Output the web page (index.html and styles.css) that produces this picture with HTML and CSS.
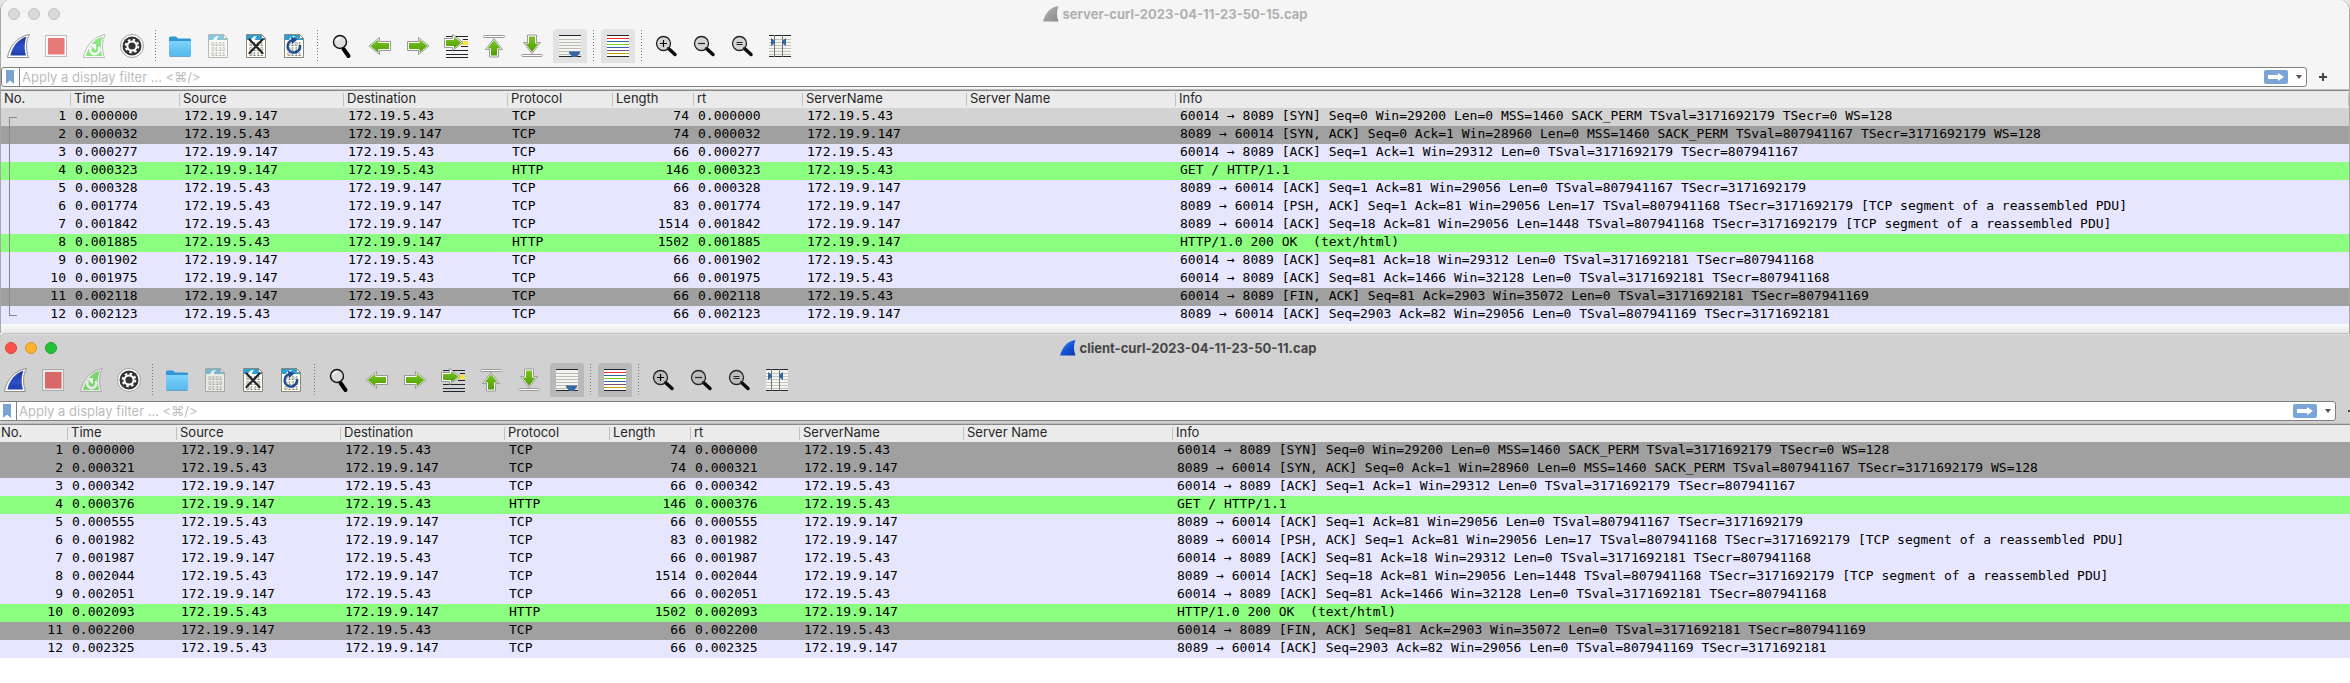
FILE: index.html
```html
<!DOCTYPE html>
<html lang="en">
<head>
<meta charset="utf-8">
<title>Packet captures</title>
<link rel="stylesheet" href="styles.css">
</head>
<body>
<svg class="sprite" aria-hidden="true">
  <defs>
    <linearGradient id="g-blue" x1="0" y1="0" x2="0" y2="1"><stop offset="0" stop-color="#1f3796"/><stop offset=".6" stop-color="#2d4fc8"/><stop offset="1" stop-color="#2340a8"/></linearGradient>
    <linearGradient id="g-app" x1="0" y1="0" x2="1" y2="1"><stop offset="0" stop-color="#3fa0f5"/><stop offset=".5" stop-color="#1658d8"/><stop offset="1" stop-color="#0c36a8"/></linearGradient>
    <linearGradient id="g-gray" x1="0" y1="0" x2="1" y2="1"><stop offset="0" stop-color="#b4b4b4"/><stop offset="1" stop-color="#8a8a8a"/></linearGradient>
    <linearGradient id="g-green" x1="0" y1="0" x2="0" y2="1"><stop offset="0" stop-color="#7ac520"/><stop offset="1" stop-color="#4f9d08"/></linearGradient>
    <linearGradient id="g-folder" x1="0" y1="0" x2="0" y2="1"><stop offset="0" stop-color="#7fd3fb"/><stop offset="1" stop-color="#55b9ef"/></linearGradient>
  </defs>
  <symbol id="i-fin" viewBox="0 0 34 34">
    <path d="M6.500 28.500C8 18 16 7.500 28.500 5.500C25 11 24.500 21 27.500 28.500Z" fill="#fff" stroke="#8e8e8e"/>
    <path d="M9.500 26.500C11 18 17 10 25.500 7.800C23.500 13 23 20 25 26.500Z" fill="url(#g-blue)"/>
  </symbol>
  <symbol id="i-stop" viewBox="0 0 34 34">
    <rect x="6.500" y="6.500" width="21" height="21" fill="#fff" stroke="#8e8e8e"/>
    <rect x="9" y="9" width="16.500" height="16.500" fill="#dd1515"/>
  </symbol>
  <symbol id="i-restart" viewBox="0 0 34 34">
    <path d="M6.500 28.500C8 18 16 7.500 28.500 5.500C25 11 24.500 21 27.500 28.500Z" fill="#fff" stroke="#8e8e8e"/>
    <path d="M9 27C11 18 17 10 26 7.500C23.500 13 23 20 25.300 27Z" fill="#34da1e"/>
    <path d="M14 18A4.500 4.500 0 1 0 21.500 18" fill="none" stroke="#fff" stroke-width="2.500"/>
    <path d="M12 15H19V21.500Z" fill="#fff"/>
  </symbol>
  <symbol id="i-gear" viewBox="0 0 34 34">
    <circle cx="17" cy="17" r="11.500" fill="#fff" stroke="#a0a0a0"/>
    <circle cx="17" cy="17" r="9.500" fill="#333"/>
    <circle cx="17" cy="17" r="4.600" fill="none" stroke="#fff" stroke-width="2"/>
    <circle cx="17" cy="17" r="6.300" fill="none" stroke="#fff" stroke-width="2" stroke-dasharray="2.470 2.470"/>
  </symbol>
  <symbol id="i-folder" viewBox="0 0 34 34">
    <path d="M6 9Q6 7.500 7.500 7.500H13L15 9.500H27Q28 9.500 28 11V14H6Z" fill="#2f97d8"/>
    <path d="M6 12H28V25.500Q28 27 26.500 27H7.500Q6 27 6 25.500Z" fill="url(#g-folder)"/>
    <path d="M6.500 27.500H27.500" stroke="#3a87b8" stroke-opacity=".7"/>
  </symbol>
  <symbol id="i-doc" viewBox="0 0 34 34">
    <path d="M7.500 5.500H22.500L26.500 9.500V28.500H7.500Z" fill="#fffff4" stroke="#85877c"/>
    <path d="M8 6H22V10H26V11H16C16 9 17 8 18 7C14 7 13 9 12 11H8Z" fill="#2a9fd8"/>
    <path d="M22.500 5.500V9.500H26.500Z" fill="#fff" stroke="#85877c"/>
    <text x="10" y="17" class="bits">0101</text><text x="10" y="22" class="bits">0110</text><text x="10" y="27" class="bits">0111</text>
  </symbol>
  <symbol id="i-cross" viewBox="0 0 34 34">
    <path d="M10.500 10.500L23.500 24M23.500 10.500L10.500 24" fill="none" stroke="#23272b" stroke-width="2.200" stroke-linecap="round"/>
  </symbol>
  <symbol id="i-reload" viewBox="0 0 34 34">
    <path d="M16 11A6.300 6.300 0 1 0 23 16" fill="none" stroke="#1f4a94" stroke-width="2.400"/>
    <path d="M14 7.500L20.500 10.500L15 15Z" fill="#1f4a94"/>
  </symbol>
  <symbol id="i-find" viewBox="0 0 34 34">
    <path d="M18.500 20L23.500 27" stroke="#000" stroke-width="4" stroke-linecap="round"/>
    <circle cx="15" cy="13" r="6.500" fill="#dcdcdc" fill-opacity=".85" stroke="#111" stroke-width="1.400"/>
    <path d="M11 12Q12 9 15 9" fill="none" stroke="#fff" stroke-width="1.500"/>
  </symbol>
  <symbol id="i-right" viewBox="0 0 34 34">
    <path d="M6.500 12.500H17.500V8.500L28 17L17.500 25.500V21.500H6.500Z" fill="#fff" stroke="#999" stroke-linejoin="round"/>
    <path d="M8 14H18.500V10.500L26.500 17L18.500 23.500V20H8Z" fill="url(#g-green)"/>
  </symbol>
  <symbol id="i-left" viewBox="0 0 34 34">
    <path d="M27.500 12.500H16.500V8.500L6 17L16.500 25.500V21.500H27.500Z" fill="#fff" stroke="#999" stroke-linejoin="round"/>
    <path d="M26 14H15.500V10.500L7.500 17L15.500 23.500V20H26Z" fill="url(#g-green)"/>
  </symbol>
  <symbol id="i-goto" viewBox="0 0 34 34">
    <path d="M7 7.500H29M7 21.500H29M7 25.500H29M7 28.500H29M24 10.500H29M22 17.500H29" stroke="#20252b"/>
    <path d="M21 12H29V16H21Z" fill="#fbe33c"/>
    <path d="M5.500 9.500H13.500V5.500L24 13.500L13.500 21.500V18.500H5.500Z" fill="#fff" stroke="#999" stroke-linejoin="round"/>
    <path d="M7 11H15V8L22.500 13.500L15 19.500V17H7Z" fill="url(#g-green)"/>
  </symbol>
  <symbol id="i-top" viewBox="0 0 34 34">
    <rect x="6.500" y="6.500" width="21" height="2" rx="1" fill="#fff" stroke="#999"/>
    <path d="M12.500 28V20.500H8.500L17 9.500L25.500 20.500H21.500V28Z" fill="#fff" stroke="#999" stroke-linejoin="round"/>
    <path d="M14 26.500V19.500H10.500L17 11L23.500 19.500H20V26.500Z" fill="url(#g-green)"/>
  </symbol>
  <symbol id="i-bottom" viewBox="0 0 34 34">
    <rect x="6.500" y="25.500" width="21" height="2" rx="1" fill="#fff" stroke="#999"/>
    <path d="M12.500 6V13.500H8.500L17 24.500L25.500 13.500H21.500V6Z" fill="#fff" stroke="#999" stroke-linejoin="round"/>
    <path d="M14 7.500V14.500H10.500L17 23L23.500 14.500H20V7.500Z" fill="url(#g-green)"/>
  </symbol>
  <symbol id="i-autoscroll" viewBox="0 0 34 34">
    <rect x="6" y="6" width="22" height="22" fill="#f4f4f0"/>
    <path d="M6 10.500H28M6 13.500H28M6 16.500H28M6 19.500H28M6 22.500H28M6 25.500H28" stroke="#b9bbb3"/>
    <path d="M6 6.500H28M6 27.500H28" stroke="#20252b"/>
    <path d="M16 22.500H27V24L23.500 28H19.500L16 24Z" fill="#3465a4"/>
  </symbol>
  <symbol id="i-colorize" viewBox="0 0 34 34">
    <rect x="6" y="6" width="22" height="22" fill="#fff"/>
    <path d="M6 6.500H28M6 27.500H28" stroke="#20252b"/>
    <path d="M6 9.500H28" stroke="#ef2929"/><path d="M6 12.500H28" stroke="#3465a4"/><path d="M6 15.500H28" stroke="#73d216"/>
    <path d="M6 18.500H28" stroke="#3465a4"/><path d="M6 21.500H28" stroke="#75507b"/><path d="M6 24.500H28" stroke="#c4a000"/>
  </symbol>
  <symbol id="i-lens" viewBox="0 0 34 34">
    <path d="M19.500 19.500L26 25.500" stroke="#0c0c0c" stroke-width="3.500" stroke-linecap="round"/>
    <circle cx="14.500" cy="14.500" r="7" fill="#999" fill-opacity=".35" stroke="#222" stroke-width="1.300"/>
  </symbol>
  <symbol id="i-plus" viewBox="0 0 34 34"><path d="M11 14.500H18M14.500 11V18" stroke="#000" stroke-width="1.200"/></symbol>
  <symbol id="i-minus" viewBox="0 0 34 34"><path d="M11 14.500H18" stroke="#222" stroke-width="1.200"/></symbol>
  <symbol id="i-equal" viewBox="0 0 34 34"><path d="M11.500 13.500H17.500M11.500 15.500H17.500" stroke="#222"/></symbol>
  <symbol id="i-columns" viewBox="0 0 34 34">
    <rect x="6" y="6" width="22" height="22" fill="#f4f4f0"/>
    <path d="M6 10.500H28M6 13.500H28M6 16.500H28M6 19.500H28M6 22.500H28M6 25.500H28" stroke="#c2c4bc"/>
    <path d="M6 6.500H28M6 27.500H28" stroke="#20252b"/>
    <path d="M11.500 6V28M19.500 6V28" stroke="#777"/>
    <path d="M8 9L12 12V14L8 17ZM23 9L19 12V14L23 17Z" fill="#3465a4"/>
  </symbol>
  <symbol id="i-bookmark" viewBox="0 0 16 18"><path d="M4 2H12V16L8 12.500L4 16Z" fill="#7aa3d4"/></symbol>
  <symbol id="i-apply" viewBox="0 0 24 14"><path d="M4 5H14V3L20 7L14 11V9H4Z" fill="#fff"/></symbol>
  <symbol id="i-caret" viewBox="0 0 14 14"><path d="M4 5H10L7 9Z" fill="#555"/></symbol>
  <symbol id="i-add" viewBox="0 0 10 10"><path d="M1 5H9M5 1V9" stroke="#444" stroke-width="2"/></symbol>
  <symbol id="i-app" viewBox="0 0 16 16"><path d="M0 15.500C2 8 7 1 15.500 0C13.500 5 13.500 10 15.500 15.500Z"/></symbol>
</svg>

<main class="desktop">
<section class="window window--back" aria-label="Server capture">
  <header class="titlebar">
    <div class="lights"><button class="light" aria-label="Close"></button><button class="light" aria-label="Minimize"></button><button class="light" aria-label="Zoom"></button></div>
    <h1 class="title"><svg class="app-icon"><use href="#i-app"/></svg>server-curl-2023-04-11-23-50-15.cap</h1>
  </header>
  <nav class="toolbar" aria-label="Main toolbar">
    <button class="tool" aria-label="Start capture"><svg><use href="#i-fin"/></svg></button>
    <button class="tool tool--dim" aria-label="Stop capture"><svg><use href="#i-stop"/></svg></button>
    <button class="tool tool--dim" aria-label="Restart capture"><svg><use href="#i-restart"/></svg></button>
    <button class="tool" aria-label="Capture options"><svg><use href="#i-gear"/></svg></button>
    <span class="sep"></span>
    <button class="tool" aria-label="Open file"><svg><use href="#i-folder"/></svg></button>
    <button class="tool tool--dim" aria-label="Save file"><svg><use href="#i-doc"/></svg></button>
    <button class="tool" aria-label="Close file"><svg><use href="#i-doc"/><use href="#i-cross"/></svg></button>
    <button class="tool" aria-label="Reload file"><svg><use href="#i-doc"/><use href="#i-reload"/></svg></button>
    <span class="sep"></span>
    <button class="tool" aria-label="Find packet"><svg><use href="#i-find"/></svg></button>
    <button class="tool" aria-label="Previous packet"><svg><use href="#i-left"/></svg></button>
    <button class="tool" aria-label="Next packet"><svg><use href="#i-right"/></svg></button>
    <button class="tool" aria-label="Go to packet"><svg><use href="#i-goto"/></svg></button>
    <button class="tool" aria-label="First packet"><svg><use href="#i-top"/></svg></button>
    <button class="tool" aria-label="Last packet"><svg><use href="#i-bottom"/></svg></button>
    <button class="tool" aria-label="Auto scroll" aria-pressed="true"><svg><use href="#i-autoscroll"/></svg></button>
    <span class="sep"></span>
    <button class="tool" aria-label="Colorize packets" aria-pressed="true"><svg><use href="#i-colorize"/></svg></button>
    <span class="sep"></span>
    <button class="tool" aria-label="Zoom in"><svg><use href="#i-lens"/><use href="#i-plus"/></svg></button>
    <button class="tool" aria-label="Zoom out"><svg><use href="#i-lens"/><use href="#i-minus"/></svg></button>
    <button class="tool" aria-label="Normal size"><svg><use href="#i-lens"/><use href="#i-equal"/></svg></button>
    <button class="tool" aria-label="Resize columns"><svg><use href="#i-columns"/></svg></button>
  </nav>
  <form class="filter">
    <div class="filter-box">
      <button type="button" class="bookmark" aria-label="Bookmarks"><svg><use href="#i-bookmark"/></svg></button>
      <input class="filter-input" type="text" aria-label="Display filter" placeholder="Apply a display filter ... &lt;⌘/&gt;">
      <button type="button" class="apply" aria-label="Apply"><svg><use href="#i-apply"/></svg></button>
      <button type="button" class="caret" aria-label="Recent filters"><svg><use href="#i-caret"/></svg></button>
    </div>
    <button type="button" class="add" aria-label="Add filter button"><svg><use href="#i-add"/></svg></button>
  </form>
  <table class="packets">
    <colgroup><col class="c-no"><col class="c-time"><col class="c-addr"><col class="c-addr"><col class="c-proto"><col class="c-len"><col class="c-time"><col class="c-addr"><col class="c-name"><col></colgroup>
    <thead><tr><th>No.</th><th>Time</th><th>Source</th><th>Destination</th><th>Protocol</th><th>Length</th><th>rt</th><th>ServerName</th><th>Server Name</th><th>Info</th></tr></thead>
    <tbody class="related">
      <tr class="selected"><td>1</td><td>0.000000</td><td>172.19.9.147</td><td>172.19.5.43</td><td>TCP</td><td>74</td><td>0.000000</td><td>172.19.5.43</td><td></td><td>60014 → 8089 [SYN] Seq=0 Win=29200 Len=0 MSS=1460 SACK_PERM TSval=3171692179 TSecr=0 WS=128</td></tr>
      <tr class="syn"><td>2</td><td>0.000032</td><td>172.19.5.43</td><td>172.19.9.147</td><td>TCP</td><td>74</td><td>0.000032</td><td>172.19.9.147</td><td></td><td>8089 → 60014 [SYN, ACK] Seq=0 Ack=1 Win=28960 Len=0 MSS=1460 SACK_PERM TSval=807941167 TSecr=3171692179 WS=128</td></tr>
      <tr><td>3</td><td>0.000277</td><td>172.19.9.147</td><td>172.19.5.43</td><td>TCP</td><td>66</td><td>0.000277</td><td>172.19.5.43</td><td></td><td>60014 → 8089 [ACK] Seq=1 Ack=1 Win=29312 Len=0 TSval=3171692179 TSecr=807941167</td></tr>
      <tr class="http"><td>4</td><td>0.000323</td><td>172.19.9.147</td><td>172.19.5.43</td><td>HTTP</td><td>146</td><td>0.000323</td><td>172.19.5.43</td><td></td><td>GET / HTTP/1.1</td></tr>
      <tr><td>5</td><td>0.000328</td><td>172.19.5.43</td><td>172.19.9.147</td><td>TCP</td><td>66</td><td>0.000328</td><td>172.19.9.147</td><td></td><td>8089 → 60014 [ACK] Seq=1 Ack=81 Win=29056 Len=0 TSval=807941167 TSecr=3171692179</td></tr>
      <tr><td>6</td><td>0.001774</td><td>172.19.5.43</td><td>172.19.9.147</td><td>TCP</td><td>83</td><td>0.001774</td><td>172.19.9.147</td><td></td><td>8089 → 60014 [PSH, ACK] Seq=1 Ack=81 Win=29056 Len=17 TSval=807941168 TSecr=3171692179 [TCP segment of a reassembled PDU]</td></tr>
      <tr><td>7</td><td>0.001842</td><td>172.19.5.43</td><td>172.19.9.147</td><td>TCP</td><td>1514</td><td>0.001842</td><td>172.19.9.147</td><td></td><td>8089 → 60014 [ACK] Seq=18 Ack=81 Win=29056 Len=1448 TSval=807941168 TSecr=3171692179 [TCP segment of a reassembled PDU]</td></tr>
      <tr class="http"><td>8</td><td>0.001885</td><td>172.19.5.43</td><td>172.19.9.147</td><td>HTTP</td><td>1502</td><td>0.001885</td><td>172.19.9.147</td><td></td><td>HTTP/1.0 200 OK&nbsp; (text/html)</td></tr>
      <tr><td>9</td><td>0.001902</td><td>172.19.9.147</td><td>172.19.5.43</td><td>TCP</td><td>66</td><td>0.001902</td><td>172.19.5.43</td><td></td><td>60014 → 8089 [ACK] Seq=81 Ack=18 Win=29312 Len=0 TSval=3171692181 TSecr=807941168</td></tr>
      <tr><td>10</td><td>0.001975</td><td>172.19.9.147</td><td>172.19.5.43</td><td>TCP</td><td>66</td><td>0.001975</td><td>172.19.5.43</td><td></td><td>60014 → 8089 [ACK] Seq=81 Ack=1466 Win=32128 Len=0 TSval=3171692181 TSecr=807941168</td></tr>
      <tr class="syn"><td>11</td><td>0.002118</td><td>172.19.9.147</td><td>172.19.5.43</td><td>TCP</td><td>66</td><td>0.002118</td><td>172.19.5.43</td><td></td><td>60014 → 8089 [FIN, ACK] Seq=81 Ack=2903 Win=35072 Len=0 TSval=3171692181 TSecr=807941169</td></tr>
      <tr><td>12</td><td>0.002123</td><td>172.19.5.43</td><td>172.19.9.147</td><td>TCP</td><td>66</td><td>0.002123</td><td>172.19.9.147</td><td></td><td>8089 → 60014 [ACK] Seq=2903 Ack=82 Win=29056 Len=0 TSval=807941169 TSecr=3171692181</td></tr>
    </tbody>
  </table>
</section>

<section class="window window--front" aria-label="Client capture">
  <header class="titlebar">
    <div class="lights"><button class="light light--close" aria-label="Close"></button><button class="light light--min" aria-label="Minimize"></button><button class="light light--zoom" aria-label="Zoom"></button></div>
    <h1 class="title"><svg class="app-icon"><use href="#i-app"/></svg>client-curl-2023-04-11-23-50-11.cap</h1>
  </header>
  <nav class="toolbar" aria-label="Main toolbar">
    <button class="tool" aria-label="Start capture"><svg><use href="#i-fin"/></svg></button>
    <button class="tool tool--dim" aria-label="Stop capture"><svg><use href="#i-stop"/></svg></button>
    <button class="tool tool--dim" aria-label="Restart capture"><svg><use href="#i-restart"/></svg></button>
    <button class="tool" aria-label="Capture options"><svg><use href="#i-gear"/></svg></button>
    <span class="sep"></span>
    <button class="tool" aria-label="Open file"><svg><use href="#i-folder"/></svg></button>
    <button class="tool tool--dim" aria-label="Save file"><svg><use href="#i-doc"/></svg></button>
    <button class="tool" aria-label="Close file"><svg><use href="#i-doc"/><use href="#i-cross"/></svg></button>
    <button class="tool" aria-label="Reload file"><svg><use href="#i-doc"/><use href="#i-reload"/></svg></button>
    <span class="sep"></span>
    <button class="tool" aria-label="Find packet"><svg><use href="#i-find"/></svg></button>
    <button class="tool" aria-label="Previous packet"><svg><use href="#i-left"/></svg></button>
    <button class="tool" aria-label="Next packet"><svg><use href="#i-right"/></svg></button>
    <button class="tool" aria-label="Go to packet"><svg><use href="#i-goto"/></svg></button>
    <button class="tool" aria-label="First packet"><svg><use href="#i-top"/></svg></button>
    <button class="tool" aria-label="Last packet"><svg><use href="#i-bottom"/></svg></button>
    <button class="tool" aria-label="Auto scroll" aria-pressed="true"><svg><use href="#i-autoscroll"/></svg></button>
    <span class="sep"></span>
    <button class="tool" aria-label="Colorize packets" aria-pressed="true"><svg><use href="#i-colorize"/></svg></button>
    <span class="sep"></span>
    <button class="tool" aria-label="Zoom in"><svg><use href="#i-lens"/><use href="#i-plus"/></svg></button>
    <button class="tool" aria-label="Zoom out"><svg><use href="#i-lens"/><use href="#i-minus"/></svg></button>
    <button class="tool" aria-label="Normal size"><svg><use href="#i-lens"/><use href="#i-equal"/></svg></button>
    <button class="tool" aria-label="Resize columns"><svg><use href="#i-columns"/></svg></button>
  </nav>
  <form class="filter">
    <div class="filter-box">
      <button type="button" class="bookmark" aria-label="Bookmarks"><svg><use href="#i-bookmark"/></svg></button>
      <input class="filter-input" type="text" aria-label="Display filter" placeholder="Apply a display filter ... &lt;⌘/&gt;">
      <button type="button" class="apply" aria-label="Apply"><svg><use href="#i-apply"/></svg></button>
      <button type="button" class="caret" aria-label="Recent filters"><svg><use href="#i-caret"/></svg></button>
    </div>
    <button type="button" class="add" aria-label="Add filter button"><svg><use href="#i-add"/></svg></button>
  </form>
  <table class="packets">
    <colgroup><col class="c-no"><col class="c-time"><col class="c-addr"><col class="c-addr"><col class="c-proto"><col class="c-len"><col class="c-time"><col class="c-addr"><col class="c-name"><col></colgroup>
    <thead><tr><th>No.</th><th>Time</th><th>Source</th><th>Destination</th><th>Protocol</th><th>Length</th><th>rt</th><th>ServerName</th><th>Server Name</th><th>Info</th></tr></thead>
    <tbody>
      <tr class="syn"><td>1</td><td>0.000000</td><td>172.19.9.147</td><td>172.19.5.43</td><td>TCP</td><td>74</td><td>0.000000</td><td>172.19.5.43</td><td></td><td>60014 → 8089 [SYN] Seq=0 Win=29200 Len=0 MSS=1460 SACK_PERM TSval=3171692179 TSecr=0 WS=128</td></tr>
      <tr class="syn"><td>2</td><td>0.000321</td><td>172.19.5.43</td><td>172.19.9.147</td><td>TCP</td><td>74</td><td>0.000321</td><td>172.19.9.147</td><td></td><td>8089 → 60014 [SYN, ACK] Seq=0 Ack=1 Win=28960 Len=0 MSS=1460 SACK_PERM TSval=807941167 TSecr=3171692179 WS=128</td></tr>
      <tr><td>3</td><td>0.000342</td><td>172.19.9.147</td><td>172.19.5.43</td><td>TCP</td><td>66</td><td>0.000342</td><td>172.19.5.43</td><td></td><td>60014 → 8089 [ACK] Seq=1 Ack=1 Win=29312 Len=0 TSval=3171692179 TSecr=807941167</td></tr>
      <tr class="http"><td>4</td><td>0.000376</td><td>172.19.9.147</td><td>172.19.5.43</td><td>HTTP</td><td>146</td><td>0.000376</td><td>172.19.5.43</td><td></td><td>GET / HTTP/1.1</td></tr>
      <tr><td>5</td><td>0.000555</td><td>172.19.5.43</td><td>172.19.9.147</td><td>TCP</td><td>66</td><td>0.000555</td><td>172.19.9.147</td><td></td><td>8089 → 60014 [ACK] Seq=1 Ack=81 Win=29056 Len=0 TSval=807941167 TSecr=3171692179</td></tr>
      <tr><td>6</td><td>0.001982</td><td>172.19.5.43</td><td>172.19.9.147</td><td>TCP</td><td>83</td><td>0.001982</td><td>172.19.9.147</td><td></td><td>8089 → 60014 [PSH, ACK] Seq=1 Ack=81 Win=29056 Len=17 TSval=807941168 TSecr=3171692179 [TCP segment of a reassembled PDU]</td></tr>
      <tr><td>7</td><td>0.001987</td><td>172.19.9.147</td><td>172.19.5.43</td><td>TCP</td><td>66</td><td>0.001987</td><td>172.19.5.43</td><td></td><td>60014 → 8089 [ACK] Seq=81 Ack=18 Win=29312 Len=0 TSval=3171692181 TSecr=807941168</td></tr>
      <tr><td>8</td><td>0.002044</td><td>172.19.5.43</td><td>172.19.9.147</td><td>TCP</td><td>1514</td><td>0.002044</td><td>172.19.9.147</td><td></td><td>8089 → 60014 [ACK] Seq=18 Ack=81 Win=29056 Len=1448 TSval=807941168 TSecr=3171692179 [TCP segment of a reassembled PDU]</td></tr>
      <tr><td>9</td><td>0.002051</td><td>172.19.9.147</td><td>172.19.5.43</td><td>TCP</td><td>66</td><td>0.002051</td><td>172.19.5.43</td><td></td><td>60014 → 8089 [ACK] Seq=81 Ack=1466 Win=32128 Len=0 TSval=3171692181 TSecr=807941168</td></tr>
      <tr class="http"><td>10</td><td>0.002093</td><td>172.19.5.43</td><td>172.19.9.147</td><td>HTTP</td><td>1502</td><td>0.002093</td><td>172.19.9.147</td><td></td><td>HTTP/1.0 200 OK&nbsp; (text/html)</td></tr>
      <tr class="syn"><td>11</td><td>0.002200</td><td>172.19.9.147</td><td>172.19.5.43</td><td>TCP</td><td>66</td><td>0.002200</td><td>172.19.5.43</td><td></td><td>60014 → 8089 [FIN, ACK] Seq=81 Ack=2903 Win=35072 Len=0 TSval=3171692181 TSecr=807941169</td></tr>
      <tr><td>12</td><td>0.002325</td><td>172.19.5.43</td><td>172.19.9.147</td><td>TCP</td><td>66</td><td>0.002325</td><td>172.19.9.147</td><td></td><td>8089 → 60014 [ACK] Seq=2903 Ack=82 Win=29056 Len=0 TSval=807941169 TSecr=3171692181</td></tr>
    </tbody>
  </table>
</section>
</main>
</body>
</html>
```
FILE: styles.css
```css
* { box-sizing: border-box; }

body {
  margin: 0;
  background: #e6e6e6;
  font-family: Inter, "Liberation Sans", "DejaVu Sans", sans-serif;
  font-size: 13px;
  color: #262626;
}

button {
  margin: 0;
  padding: 0;
  border: 0;
  background: none;
}

.sprite { position: absolute; width: 0; height: 0; overflow: visible; }

.bits {
  font-family: "Liberation Mono", monospace;
  font-size: 6px;
  fill: #666;
}

.desktop {
  display: flex;
  flex-direction: column;
  min-height: 100vh;
  overflow: hidden;
}

.window {
  --chrome: #f5f5f5;
  --pressed: #e2e2e2;
  --title: #b0b0b0;
  border: solid #a8a8a8;
  border-width: 0 1px;
  border-radius: 10px 10px 0 0;
  background: var(--chrome);
}

.window--back {
  padding-bottom: 9px;
  background: linear-gradient(to top, #e8e8e8, #fafafa 9px, var(--chrome) 9px);
}

.window--front {
  --chrome: #d1d1d1;
  --pressed: #b9b9b9;
  --title: #464646;
  flex: 1;
  display: flex;
  flex-direction: column;
  margin: 0 -29px 0 -3px;
  background: #fff;
}

.titlebar {
  display: grid;
  grid-template-columns: 1fr auto 1fr;
  align-items: center;
  height: 29px;
  padding: 0 7px 2px;
  border-radius: 10px 10px 0 0;
  background: var(--chrome);
}

.window--front .titlebar {
  height: 30px;
  padding-bottom: 0;
  box-shadow: inset 0 1px #bdbdbd, inset 0 2px #dedede;
}

.lights { display: flex; gap: 8px; }

.light {
  width: 12px;
  height: 12px;
  border: 1px solid #c4c4c4;
  border-radius: 50%;
  background: #dadada;
}

.light--close { background: #ff5149; border-color: #df3f38; }
.light--min { background: #fdb32c; border-color: #d9962a; }
.light--zoom { background: #24c138; border-color: #1aa42c; }

.title {
  display: flex;
  align-items: center;
  gap: 4px;
  margin: 0;
  font-size: 13px;
  font-weight: 700;
  line-height: 16px;
  color: var(--title);
}

.app-icon { width: 16px; height: 16px; fill: url(#g-gray); }
.window--front .app-icon { fill: url(#g-app); }

.toolbar {
  display: flex;
  gap: 4px;
  height: 38px;
  background: var(--chrome);
}

.tool { width: 34px; height: 34px; border-radius: 4px 4px 0 0; }
.tool svg { display: block; width: 34px; height: 34px; }
.tool--dim svg { opacity: 0.55; }
.tool[aria-pressed="true"] { background: var(--pressed); }

.sep {
  width: 6px;
  height: 32px;
  margin-top: 1px;
  background: repeating-linear-gradient(#777 0 1px, transparent 1px 3px) 2px 0 / 1px 100% no-repeat;
}

.filter {
  display: flex;
  height: 22px;
  background: var(--chrome);
}

.filter-box {
  flex: 1;
  display: flex;
  align-items: center;
  height: 20px;
  border: 1px solid #808080;
  border-radius: 3px;
  background: #fff;
}

.bookmark { width: 18px; height: 18px; border-right: 1px solid #808080; }
.bookmark svg { display: block; width: 16px; height: 18px; }

.filter-input {
  flex: 1;
  min-width: 0;
  height: 18px;
  padding: 0 2px;
  border: 0;
  outline: 0;
  background: none;
  font: inherit;
}
.filter-input::placeholder { color: #bcbcbc; }

.apply {
  width: 24px;
  height: 14px;
  margin-right: 4px;
  border-radius: 2px;
  background: #7ba5d6;
}
.apply svg { display: block; width: 24px; height: 14px; }
.caret svg { display: block; width: 14px; height: 14px; }

.add { width: 32px; height: 20px; margin-right: 10px; }
.add svg { width: 10px; height: 10px; }

.packets {
  width: 100%;
  border-top: 1px solid #bdbdbd;
  border-spacing: 0;
  table-layout: fixed;
}

.c-no { width: 70px; }
.c-time { width: 109px; }
.c-addr { width: 164px; }
.c-proto { width: 105px; }
.c-len { width: 81px; }
.c-name { width: 209px; }

th {
  height: 18px;
  padding: 0 4px 2px 3px;
  border-top: 1px solid #888;
  background: linear-gradient(#c0c0c0, #c0c0c0) right 2px / 1px 13px no-repeat #ebebeb;
  font-weight: 400;
  line-height: 15px;
  text-align: left;
}

td {
  height: 18px;
  padding: 0 5px 2px 4px;
  overflow: hidden;
  background: var(--row, #e6e6ff);
  font-family: "DejaVu Sans Mono", "Liberation Mono", monospace;
  line-height: 16px;
  color: #000;
  white-space: nowrap;
}

td:first-child, td:nth-child(6) { text-align: right; }

.selected { --row: #d3d3d3; }
.syn { --row: #a0a0a0; }
.http { --row: #8cff80; }

/* Bracket that joins the packets of one conversation */
.related td:first-child {
  background: linear-gradient(#888, #888) 8px 0 / 1px 100% no-repeat var(--row, #e6e6ff);
}
.related tr:first-child td:first-child {
  background:
    linear-gradient(#888, #888) 8px 9px / 8px 1px no-repeat,
    linear-gradient(#888, #888) 8px 9px / 1px 9px no-repeat var(--row);
}
.related tr:last-child td:first-child {
  background:
    linear-gradient(#888, #888) 8px 9px / 8px 1px no-repeat,
    linear-gradient(#888, #888) 8px 0 / 1px 10px no-repeat #e6e6ff;
}
```
